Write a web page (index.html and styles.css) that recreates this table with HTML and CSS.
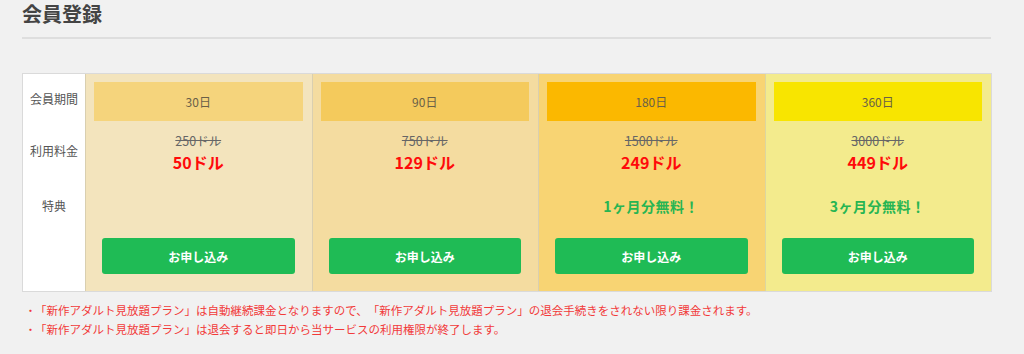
FILE: index.html
```html
<!DOCTYPE html>
<html lang="ja">
<head>
<meta charset="utf-8">
<title>会員登録</title>
<link rel="stylesheet" href="styles.css">
</head>
<body>
<div class="page">
  <h2 class="title">会員登録</h2>
  <div class="plans">
    <div class="col labels">
      <div class="row r-period"><span class="label label-period">会員期間</span></div>
      <div class="row r-price"><span class="label">利用料金</span></div>
      <div class="row r-perk"><span class="label">特典</span></div>
      <div class="row r-btn"></div>
    </div>
    <div class="col plan p30">
      <div class="row r-period"><div class="period">30日</div></div>
      <div class="row r-price"><s class="old">250ドル</s><span class="now">50ドル</span></div>
      <div class="row r-perk"></div>
      <div class="row r-btn"><a class="btn" href="#">お申し込み</a></div>
    </div>
    <div class="col plan p90">
      <div class="row r-period"><div class="period">90日</div></div>
      <div class="row r-price"><s class="old">750ドル</s><span class="now">129ドル</span></div>
      <div class="row r-perk"></div>
      <div class="row r-btn"><a class="btn" href="#">お申し込み</a></div>
    </div>
    <div class="col plan p180">
      <div class="row r-period"><div class="period">180日</div></div>
      <div class="row r-price"><s class="old">1500ドル</s><span class="now">249ドル</span></div>
      <div class="row r-perk"><span class="perk">1ヶ月分無料！</span></div>
      <div class="row r-btn"><a class="btn" href="#">お申し込み</a></div>
    </div>
    <div class="col plan p360">
      <div class="row r-period"><div class="period">360日</div></div>
      <div class="row r-price"><s class="old">3000ドル</s><span class="now">449ドル</span></div>
      <div class="row r-perk"><span class="perk">3ヶ月分無料！</span></div>
      <div class="row r-btn"><a class="btn" href="#">お申し込み</a></div>
    </div>
  </div>
  <ul class="notes">
    <li>「新作アダルト見放題プラン」は自動継続課金となりますので、「新作アダルト見放題プラン」の退会手続きをされない限り課金されます。</li>
    <li>「新作アダルト見放題プラン」は退会すると即日から当サービスの利用権限が終了します。</li>
  </ul>
</div>
</body>
</html>
```

FILE: styles.css
```css
* { box-sizing: border-box; }
html, body {
  margin: 0;
  padding: 0;
  background: #f1f1f1;
  font-family: "Noto Sans CJK JP", "Noto Sans", sans-serif;
  color: #555;
  text-spacing-trim: space-all;
}
.page {
  padding: 0 32px 0 22px;
}
.title {
  margin: 0;
  padding-top: 0;
  font-size: 20px;
  line-height: 28px;
  font-weight: bold;
  color: #444;
  height: 39px;
  border-bottom: 2px solid #dedede;
  width: 969px;
}
.plans {
  margin-top: 34px;
  width: 970px;
  display: flex;
  border: 1px solid #dadada;
  background: #fff;
}
.col {
  display: flex;
  flex-direction: column;
  padding-top: 8px;
  padding-bottom: 17px;
}
.labels {
  width: 62px;
  flex: none;
  background: #fff;
}
.plan {
  flex: 1 1 0;
  border-left: 1px solid #d9cfb0;
  padding-left: 8px;
  padding-right: 9px;
}
.row {
  display: flex;
  flex-direction: column;
  align-items: center;
  justify-content: center;
}
.r-period { height: 39px; }
.r-price { height: 59px; justify-content: flex-start; padding-top: 12px; }
.r-perk { height: 52px; }
.r-btn { height: 42px; justify-content: flex-end; }

.labels .r-price { justify-content: center; padding-top: 0; }
.label {
  font-size: 12px;
  line-height: 16px;
  color: #555;
}
.label-period { margin-top: -6px; }

.period {
  width: 100%;
  height: 39px;
  display: flex;
  align-items: center;
  justify-content: center;
  font-size: 12px;
  color: #6a6048;
}
.old {
  font-size: 12.5px;
  line-height: 16px;
  color: #666;
  text-decoration: line-through;
}
.now {
  margin-top: 2px;
  font-size: 16px;
  line-height: 22px;
  font-weight: bold;
  color: #ff0a0a;
}
.perk {
  font-size: 14px;
  font-weight: bold;
  color: #27b552;
  letter-spacing: 0.5px;
}
.btn {
  display: flex;
  align-items: center;
  justify-content: center;
  width: calc(100% - 16px);
  height: 36px;
  border-radius: 3px;
  background: #1fbb55;
  color: #fff;
  font-size: 12px;
  font-weight: bold;
  text-decoration: none;
}

.p30 { background: #f3e4bd; }
.p30 .period { background: #f5d47c; }
.p90 { background: #f4dca0; }
.p90 .period { background: #f4ca5c; }
.p180 { background: #f8d473; }
.p180 .period { background: #fbb800; }
.p360 { background: #f3eb8d; border-left-color: #dcd6a0; }
.p360 .period { background: #f8e500; }

.notes {
  list-style: none;
  margin: 9px 0 0;
  padding: 0 0 0 3px;
}
.notes li {
  font-size: 11.5px;
  line-height: 19px;
  color: #f23a3a;
}
.notes li::before {
  content: "・";
  display: inline-block;
  width: 10px;
  font-size: 11px;
}
```
